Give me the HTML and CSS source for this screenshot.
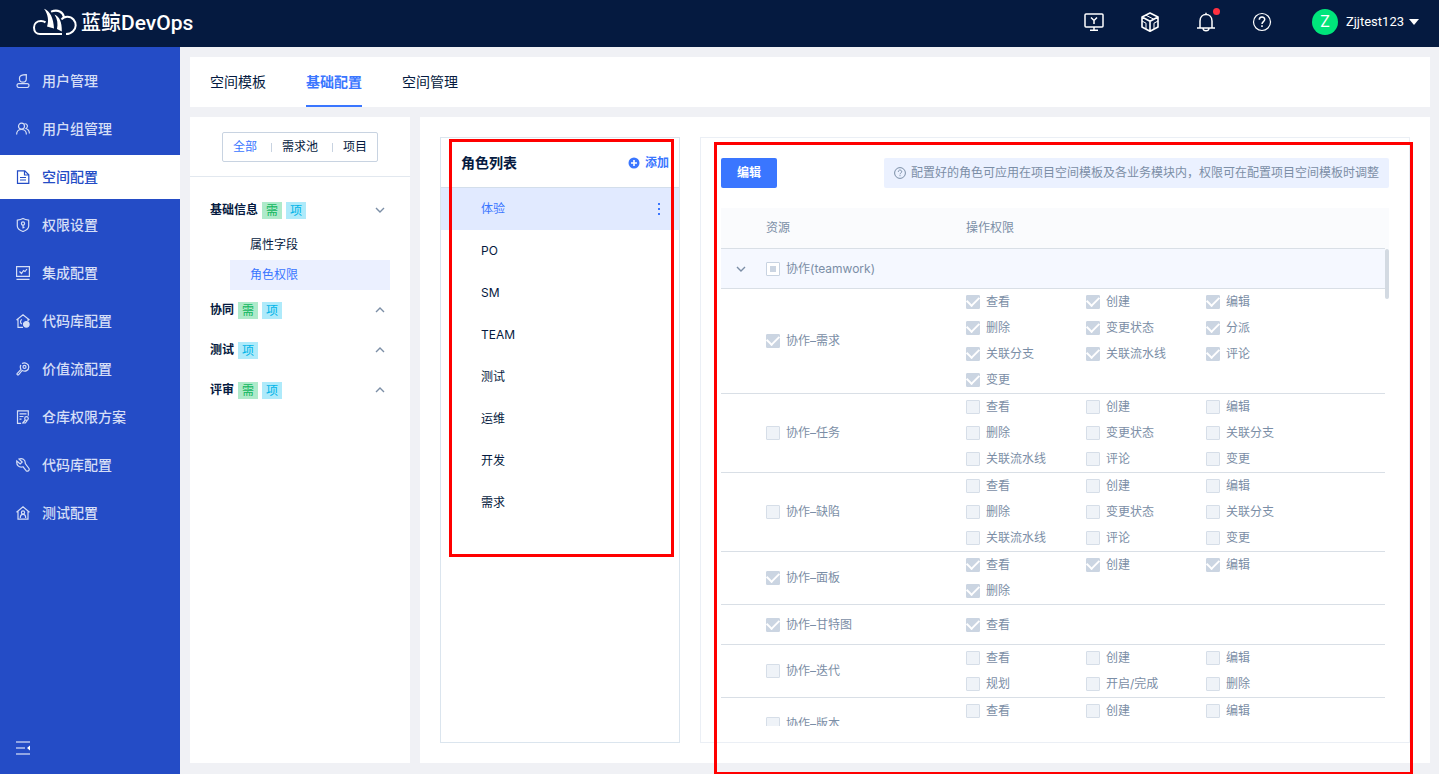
FILE: index.html
```html
<!DOCTYPE html>
<html lang="zh-CN">
<head>
<meta charset="utf-8">
<title>蓝鲸DevOps</title>
<link rel="stylesheet" href="styles.css">
</head>
<body>
<div class="app">
  <header class="topbar">
    <a class="brand" href="#">
      <svg class="brand-mark" viewBox="0 0 44 28" fill="none" stroke="currentColor" stroke-width="2">
        <path d="M29 26H7C3.500 26 1 23.500 1 19.500 1 15.500 4 13 8 13c2.200 0 3.500.6 4.500 1.400"/>
        <path d="M18 3.600C25 1 30 4 31 9.200"/>
        <path d="M28.500 11.500C31 8 37 7.500 40.500 11.500 43.500 15 43.500 20 40 23.200 38 25.200 35.500 26 33 26"/>
        <path d="M11 .8C17 3 20.500 10 21 20.500L14 18.500C16 13 15 6 11 .8Z" fill="currentColor" stroke="none"/>
        <path d="M21.500 6.500C26.500 8.500 29 14 28.800 23.500L24 21C25 16 24.500 11 21.500 6.500Z" fill="currentColor" stroke="none"/>
      </svg>
      <span class="brand-name">蓝鲸<span class="brand-latin">DevOps</span></span>
    </a>
    <div class="top-actions">
      <button class="icon-btn" aria-label="工作台">
        <svg viewBox="0 0 20 20" fill="none" stroke="currentColor" stroke-width="1.500"><rect x="1" y="2" width="18" height="13" rx="1"/><path d="M10 15v3M6 18.300h8M7 5.500l3 3 3-3M10 8.500V12"/></svg>
      </button>
      <button class="icon-btn" aria-label="产品">
        <svg viewBox="0 0 20 20" fill="none" stroke="currentColor" stroke-width="1.600" stroke-linejoin="round"><path d="M10 1l8 4-8 4.200L2 5zM2 5v10l8 4.300 8-4.300V5M10 9.200v10"/><path d="M5.800 3.200l8 4M2 9l4 2.200V17M18 9l-4 2.200V17" stroke-width="1"/></svg>
      </button>
      <button class="icon-btn" aria-label="通知">
        <svg viewBox="0 0 20 20" fill="none" stroke="currentColor" stroke-width="1.500"><path d="M1 16h18M4 16V9c0-4 2.700-6.500 6-6.500S16 5 16 9v7M10 .8v1.700M7 16.500c.4 3 5.600 3 6 0"/></svg>
        <span class="dot"></span>
      </button>
      <button class="icon-btn" aria-label="帮助">
        <svg viewBox="0 0 20 20" fill="none" stroke="currentColor" stroke-width="1.200"><circle cx="10" cy="10" r="8.500"/><path d="M7.300 7.800c0-3.600 5.400-3.600 5.400-.2 0 2-2.700 2.200-2.700 4.400M10 13.300v1.700" stroke-width="1.500"/></svg>
      </button>
      <button class="user"><span class="avatar">Z</span><span class="user-name">Zjjtest123</span><svg class="caret" viewBox="0 0 10 6"><path d="M0 0h10L5 6z" fill="currentColor"/></svg></button>
    </div>
  </header>

  <div class="body">
    <nav class="sidebar">
      <ul class="menu">
        <li><a href="#" class="menu-item"><svg class="ico" viewBox="0 0 14 14"><path d="M3.500 3.700C3.500 1.800 5.500.7 10.300.6V4.800c0 2.200-1.400 3.400-3.300 3.400S3.500 7 3.500 5z"/><rect x="1" y="9.700" width="12" height="3.800" rx="1.900"/></svg>用户管理</a></li>
        <li><a href="#" class="menu-item"><svg class="ico" viewBox="0 0 14 14"><circle cx="5.500" cy="4.200" r="3"/><path d="M.6 12.500c0-3.300 2-5 4.900-5s4.900 1.700 4.900 5M8.500 1.800c3-.4 4 3.400 1.600 4.700 2 .8 3.300 2.500 3.300 5"/></svg>用户组管理</a></li>
        <li><a href="#" class="menu-item active" aria-current="page"><svg class="ico" viewBox="0 0 14 14"><path d="M1.500.8h7.300l4 4v8.600H1.500zM8.500 1v4h4M4 7.500h6M4 10h6"/></svg>空间配置</a></li>
        <li><a href="#" class="menu-item"><svg class="ico" viewBox="0 0 14 14"><path d="M7 .6C9 1.800 10.500 2 12.700 2.200V8c0 2.500-2.700 4.500-5.700 5.500C4 12.500 1.300 10.500 1.300 8V2.200C3.500 2 5 1.800 7 .6z"/><circle cx="7" cy="5.500" r="1.600"/><path d="M7 7v3.500M7 9.300h1.500"/></svg>权限设置</a></li>
        <li><a href="#" class="menu-item"><svg class="ico" viewBox="0 0 14 14"><path d="M.6.6h12.800v9.800H.6zM.5 13.300h13M3.500 5.500l2 2 2-3 1.500 1 2-2.500"/></svg>集成配置</a></li>
        <li><a href="#" class="menu-item"><svg class="ico" viewBox="0 0 14 14"><path d="M.5 6L7 .8 13.500 6M2 5v8.300h5M12 5v2M6 5.500C4 6 4 9.500 6 10"/><circle cx="10.300" cy="10.300" r="2.800" fill="currentColor"/></svg>代码库配置</a></li>
        <li><a href="#" class="menu-item"><svg class="ico" viewBox="0 0 14 14"><path d="M6 1.500C9 .2 12.800 1.500 12.800 5c0 3.400-3.500 5.200-6.600 3.400L2.700 12.600c-1 1-2.300-.4-1.400-1.300L5 7.500C4 5.500 4.300 3.800 5 3"/><circle cx="8.500" cy="4.900" r="1.500"/></svg>价值流配置</a></li>
        <li><a href="#" class="menu-item"><svg class="ico" viewBox="0 0 14 14"><path d="M5 13.300H1.500V.8h10.800v5M3.500 3.800h7M3.500 6.500h4M3.500 9.200h2"/><circle cx="10.500" cy="8.500" r="1.800"/><path d="M9.300 10l-2.500 3h2.500l2-2.700"/></svg>仓库权限方案</a></li>
        <li><a href="#" class="menu-item"><svg class="ico" viewBox="0 0 14 14"><path d="M3 1C6 0 9.500 1.200 9.300 5.500l3.700 5c.8 2-1.300 3.500-2.900 2.200L7 8.800C3 10 .2 7 .8 3l3.400 3 2-2z"/></svg>代码库配置</a></li>
        <li><a href="#" class="menu-item"><svg class="ico" viewBox="0 0 14 14"><path d="M.5 6.300L7 .8l6.500 5.500M2 5.200v8h10v-8"/><circle cx="7" cy="6.500" r="1.600"/><path d="M4.300 12c0-4.800 5.400-4.800 5.400 0"/></svg>测试配置</a></li>
      </ul>
      <button class="collapse" aria-label="收起菜单"><svg class="ico" viewBox="0 0 14 14"><path d="M0 1h14M0 7h9M0 13h14"/><path d="M14 4.500v5L11 7z" fill="currentColor" stroke="none"/></svg></button>
    </nav>

    <main class="main">
      <nav class="tabs">
        <a href="#" class="tab">空间模板</a>
        <a href="#" class="tab active">基础配置</a>
        <a href="#" class="tab">空间管理</a>
      </nav>

      <div class="columns">
        <aside class="tree-panel">
          <div class="filter">
            <div class="segment">
              <button class="seg active">全部</button><span class="seg-line"></span>
              <button class="seg">需求池</button><span class="seg-line"></span>
              <button class="seg">项目</button>
            </div>
          </div>
          <div class="tree">
            <button class="group">基础信息<span class="tag green">需</span><span class="tag cyan">项</span><svg class="chev" viewBox="0 0 10 10"><path d="M1 3l4 4 4-4"/></svg></button>
            <a href="#" class="leaf">属性字段</a>
            <a href="#" class="leaf active">角色权限</a>
            <button class="group">协同<span class="tag green">需</span><span class="tag cyan">项</span><svg class="chev" viewBox="0 0 10 10"><path d="M1 7l4-4 4 4"/></svg></button>
            <button class="group">测试<span class="tag cyan">项</span><svg class="chev" viewBox="0 0 10 10"><path d="M1 7l4-4 4 4"/></svg></button>
            <button class="group">评审<span class="tag green">需</span><span class="tag cyan">项</span><svg class="chev" viewBox="0 0 10 10"><path d="M1 7l4-4 4 4"/></svg></button>
          </div>
        </aside>

        <div class="content">
          <section class="roles">
            <div class="roles-head">
              <h2 class="roles-title">角色列表</h2>
              <button class="add"><svg class="plus" viewBox="0 0 12 12"><circle cx="6" cy="6" r="5.500" fill="currentColor"/><path d="M6 3v6M3 6h6" stroke="#fff" stroke-width="1.600"/></svg>添加</button>
            </div>
            <ul class="role-list">
              <li class="role active">体验<button class="more" aria-label="更多"><svg viewBox="0 0 2 14" fill="currentColor"><path d="M0 1h2v2H0zM0 6h2v2H0zM0 11h2v2H0z"/></svg></button></li>
              <li class="role">PO</li>
              <li class="role">SM</li>
              <li class="role">TEAM</li>
              <li class="role">测试</li>
              <li class="role">运维</li>
              <li class="role">开发</li>
              <li class="role">需求</li>
            </ul>
            <div class="mark mark-roles"></div>
          </section>

          <section class="detail">
            <div class="toolbar">
              <button class="edit">编辑</button>
              <p class="hint"><svg class="hint-ico" viewBox="0 0 12 12"><circle cx="6" cy="6" r="5.400"/><path d="M4.300 4.800c0-2.300 3.400-2.300 3.400-.1C7.700 6 6 6 6 7.300M6 8.200v1"/></svg>配置好的角色可应用在项目空间模板及各业务模块内，权限可在配置项目空间模板时调整</p>
            </div>
            <div class="table-wrap">
              <table class="perms">
                <thead>
                  <tr><th class="c-open"></th><th class="c-res">资源</th><th>操作权限</th></tr>
                </thead>
                <tbody>
                  <tr class="parent">
                    <td><svg class="chev" viewBox="0 0 10 10"><path d="M1 3l4 4 4-4"/></svg></td>
                    <td><label class="check"><input type="checkbox" class="partial" disabled>协作(teamwork)</label></td>
                    <td></td>
                  </tr>
                  <tr>
                    <td></td>
                    <td><label class="check"><input type="checkbox" checked disabled>协作–需求</label></td>
                    <td><div class="ops">
                      <label class="check"><input type="checkbox" checked disabled>查看</label>
                      <label class="check"><input type="checkbox" checked disabled>创建</label>
                      <label class="check"><input type="checkbox" checked disabled>编辑</label>
                      <label class="check"><input type="checkbox" checked disabled>删除</label>
                      <label class="check"><input type="checkbox" checked disabled>变更状态</label>
                      <label class="check"><input type="checkbox" checked disabled>分派</label>
                      <label class="check"><input type="checkbox" checked disabled>关联分支</label>
                      <label class="check"><input type="checkbox" checked disabled>关联流水线</label>
                      <label class="check"><input type="checkbox" checked disabled>评论</label>
                      <label class="check"><input type="checkbox" checked disabled>变更</label>
                    </div></td>
                  </tr>
                  <tr>
                    <td></td>
                    <td><label class="check"><input type="checkbox" disabled>协作–任务</label></td>
                    <td><div class="ops">
                      <label class="check"><input type="checkbox" disabled>查看</label>
                      <label class="check"><input type="checkbox" disabled>创建</label>
                      <label class="check"><input type="checkbox" disabled>编辑</label>
                      <label class="check"><input type="checkbox" disabled>删除</label>
                      <label class="check"><input type="checkbox" disabled>变更状态</label>
                      <label class="check"><input type="checkbox" disabled>关联分支</label>
                      <label class="check"><input type="checkbox" disabled>关联流水线</label>
                      <label class="check"><input type="checkbox" disabled>评论</label>
                      <label class="check"><input type="checkbox" disabled>变更</label>
                    </div></td>
                  </tr>
                  <tr>
                    <td></td>
                    <td><label class="check"><input type="checkbox" disabled>协作–缺陷</label></td>
                    <td><div class="ops">
                      <label class="check"><input type="checkbox" disabled>查看</label>
                      <label class="check"><input type="checkbox" disabled>创建</label>
                      <label class="check"><input type="checkbox" disabled>编辑</label>
                      <label class="check"><input type="checkbox" disabled>删除</label>
                      <label class="check"><input type="checkbox" disabled>变更状态</label>
                      <label class="check"><input type="checkbox" disabled>关联分支</label>
                      <label class="check"><input type="checkbox" disabled>关联流水线</label>
                      <label class="check"><input type="checkbox" disabled>评论</label>
                      <label class="check"><input type="checkbox" disabled>变更</label>
                    </div></td>
                  </tr>
                  <tr>
                    <td></td>
                    <td><label class="check"><input type="checkbox" checked disabled>协作–面板</label></td>
                    <td><div class="ops">
                      <label class="check"><input type="checkbox" checked disabled>查看</label>
                      <label class="check"><input type="checkbox" checked disabled>创建</label>
                      <label class="check"><input type="checkbox" checked disabled>编辑</label>
                      <label class="check"><input type="checkbox" checked disabled>删除</label>
                    </div></td>
                  </tr>
                  <tr>
                    <td></td>
                    <td><label class="check"><input type="checkbox" checked disabled>协作–甘特图</label></td>
                    <td><div class="ops">
                      <label class="check"><input type="checkbox" checked disabled>查看</label>
                    </div></td>
                  </tr>
                  <tr>
                    <td></td>
                    <td><label class="check"><input type="checkbox" disabled>协作–迭代</label></td>
                    <td><div class="ops">
                      <label class="check"><input type="checkbox" disabled>查看</label>
                      <label class="check"><input type="checkbox" disabled>创建</label>
                      <label class="check"><input type="checkbox" disabled>编辑</label>
                      <label class="check"><input type="checkbox" disabled>规划</label>
                      <label class="check"><input type="checkbox" disabled>开启/完成</label>
                      <label class="check"><input type="checkbox" disabled>删除</label>
                    </div></td>
                  </tr>
                  <tr class="two-line">
                    <td></td>
                    <td><label class="check"><input type="checkbox" disabled>协作–版本</label></td>
                    <td><div class="ops">
                      <label class="check"><input type="checkbox" disabled>查看</label>
                      <label class="check"><input type="checkbox" disabled>创建</label>
                      <label class="check"><input type="checkbox" disabled>编辑</label>
                    </div></td>
                  </tr>
                </tbody>
              </table>
              <div class="track"><div class="thumb"></div></div>
            </div>
            <div class="mark mark-detail"></div>
          </section>
        </div>
      </div>
    </main>
  </div>
</div>
</body>
</html>
```

FILE: styles.css
```css
* { box-sizing: border-box; }

:root {
  --navy: #051a40;
  --blue: #3a76ff;
  --side: #244cc6;
  --muted: #7b8ea6;
  --line: #d9dfe6;
}

body {
  margin: 0;
  font-family: Inter, "Noto Sans CJK SC", sans-serif;
  font-size: 12px;
  line-height: 20px;
  color: var(--navy);
  background: #f0f1f5;
}

button {
  margin: 0;
  padding: 0;
  border: 0;
  background: none;
  color: inherit;
  font: inherit;
  cursor: pointer;
}

a { color: inherit; text-decoration: none; }
ul { margin: 0; padding: 0; list-style: none; }
svg { display: block; flex: none; }

.app {
  display: flex;
  flex-direction: column;
  height: 100vh;
  overflow: hidden;
}

/* Top bar */
.topbar {
  display: flex;
  flex: none;
  align-items: center;
  justify-content: space-between;
  height: 47px;
  padding: 0 20px 3px 33px;
  background: var(--navy);
  color: #fff;
}

.brand { display: flex; align-items: center; gap: 4px; }
.brand-mark { width: 44px; height: 28px; }
.brand-name {
  padding-top: 2px;
  font-family: Roboto, "Noto Sans CJK SC", sans-serif;
  font-size: 20px;
  font-weight: 500;
  line-height: 28px;
}
.brand-latin { font-size: 21px; }

.top-actions { display: flex; align-items: center; gap: 36px; }
.icon-btn { position: relative; width: 20px; height: 20px; }
.icon-btn svg { width: 20px; height: 20px; }
.dot {
  position: absolute;
  top: -4px;
  right: -4px;
  width: 7px;
  height: 7px;
  border-radius: 50%;
  background: #ff3040;
}

.user { display: flex; align-items: center; margin-left: 4px; }
.avatar {
  width: 26px;
  height: 26px;
  margin-right: 8px;
  border-radius: 50%;
  background: #00e57b;
  font-size: 16px;
  line-height: 24px;
}
.user-name { font-family: Roboto, sans-serif; font-size: 13px; }
.caret { width: 10px; height: 6px; margin-left: 5px; }

.body { display: flex; flex: 1; min-height: 0; }

/* Sidebar */
.sidebar {
  display: flex;
  flex: none;
  flex-direction: column;
  justify-content: space-between;
  width: 180px;
  padding: 12px 0 19px;
  background: var(--side);
  color: #d5def6;
}
.menu { display: flex; flex-direction: column; gap: 4px; }
.menu-item {
  display: flex;
  align-items: center;
  gap: 12px;
  height: 44px;
  padding-left: 16px;
  font-size: 14px;
  font-weight: 500;
}
.menu-item.active { background: #fff; color: var(--side); }
.ico {
  width: 14px;
  height: 14px;
  fill: none;
  stroke: currentColor;
  stroke-width: 1.2;
}
.collapse { align-self: flex-start; margin-left: 16px; color: #fff; }

/* Main area */
.main {
  display: flex;
  flex: 1;
  flex-direction: column;
  gap: 10px;
  min-width: 0;
  padding: 10px 9px 11px 10px;
}
.tabs {
  display: flex;
  flex: none;
  gap: 40px;
  height: 50px;
  padding: 0 20px;
  background: #fff;
}
.tab {
  border-bottom: 2px solid transparent;
  font-size: 14px;
  line-height: 50px;
}
.tab.active { border-color: var(--blue); color: var(--blue); font-weight: 700; }

.columns { display: flex; flex: 1; gap: 10px; min-height: 0; }

/* Settings tree */
.tree-panel { flex: none; width: 220px; background: #fff; }
.filter {
  display: flex;
  justify-content: center;
  padding: 15px 0 14px;
  border-bottom: 1px solid #e2e8ef;
}
.segment {
  display: flex;
  align-items: center;
  height: 30px;
  padding: 0 10px;
  border: 1px solid #c8d3e1;
  border-radius: 2px;
}
.seg.active { color: var(--blue); }
.seg-line { width: 1px; height: 9px; margin: 0 10px 0 14px; background: #c8d3e1; }

.tree { padding-top: 13px; }
.group {
  display: flex;
  align-items: center;
  gap: 4px;
  width: 100%;
  height: 40px;
  padding: 0 25px 0 20px;
  font-weight: 700;
}
.tag {
  width: 20px;
  height: 17px;
  font-weight: 400;
  line-height: 17px;
  text-align: center;
}
.green { background: #aeeaca; color: #10b75e; }
.cyan { background: #aeeafa; color: #00b4e8; }
.chev {
  width: 10px;
  height: 10px;
  fill: none;
  stroke: var(--muted);
  stroke-width: 1.4;
}
.group .chev { margin-left: auto; }
.leaf {
  display: block;
  margin: 0 20px 0 40px;
  padding: 0 20px;
  line-height: 30px;
}
.leaf.active { background: #ebf0ff; color: var(--blue); }

/* Roles */
.content {
  display: flex;
  flex: 1;
  gap: 20px;
  min-width: 0;
  padding: 20px;
  background: #fff;
}
.roles {
  position: relative;
  flex: none;
  width: 240px;
  border: 1px solid #dbe5ee;
}
.roles-head {
  display: flex;
  align-items: center;
  justify-content: space-between;
  height: 50px;
  padding: 0 10px 0 20px;
  border-bottom: 1px solid #d3deeb;
}
.roles-title { margin: 0; font-size: 14px; font-weight: 700; }
.add {
  display: flex;
  align-items: center;
  gap: 5px;
  color: var(--blue);
  font-weight: 700;
}
.plus { width: 12px; height: 12px; }
.role {
  display: flex;
  align-items: center;
  justify-content: space-between;
  height: 42px;
  padding: 0 19px 0 40px;
}
.role.active { background: #e1eaff; color: var(--blue); }
.more svg { width: 2px; height: 14px; }

/* Permission details */
.detail {
  position: relative;
  display: flex;
  flex: 1;
  flex-direction: column;
  gap: 20px;
  min-width: 0;
  padding: 20px 20px 16px;
  border: 1px solid #ebeff5;
}
.toolbar { display: flex; flex: none; justify-content: space-between; }
.edit {
  height: 30px;
  padding: 0 16px;
  border-radius: 2px;
  background: var(--blue);
  color: #fff;
  font-weight: 700;
}
.hint {
  display: flex;
  align-items: center;
  gap: 5px;
  height: 30px;
  margin: 0;
  padding: 0 10px;
  border-radius: 2px;
  background: #ebf1ff;
  color: var(--muted);
  white-space: nowrap;
}
.hint-ico {
  width: 12px;
  height: 12px;
  fill: none;
  stroke: currentColor;
  stroke-width: 1;
}

.table-wrap { display: flex; flex: 1; min-height: 0; overflow: hidden; }
.perms {
  flex: 1;
  align-self: flex-start;
  border-collapse: separate;
  border-spacing: 0;
  table-layout: fixed;
  color: var(--muted);
}
.perms th, .perms td { padding: 0; border-bottom: 1px solid var(--line); }
.perms th {
  height: 41px;
  background: #fafbfd;
  font-weight: 400;
  text-align: left;
}
.c-open { width: 45px; }
.c-res { width: 200px; }
.perms td { height: 40px; }
.perms .parent td { background: #f5f8ff; }
.perms .two-line td { height: 53px; }
.two-line .ops { height: 52px; }
.perms td > .chev { margin: 0 auto 0 15px; }
.ops {
  display: grid;
  grid-template-columns: repeat(3, 120px);
  grid-auto-rows: 26px;
}
.check { display: flex; align-items: center; gap: 6px; white-space: nowrap; }
.check input {
  display: grid;
  flex: none;
  place-content: center;
  width: 14px;
  height: 14px;
  margin: 0;
  appearance: none;
  border: 1px solid #d6dee8;
  border-radius: 1px;
  background: #eff3f8;
}
.check input:checked { border-color: #cbd5e2; background: #cbd5e2; }
.check input:checked::before {
  content: "";
  width: 10px;
  height: 6px;
  margin-bottom: 4px;
  border: solid #fff;
  border-width: 0 0 2px 2px;
  transform: rotate(-45deg);
}
.check .partial { border-color: #c8d3e1; background: #fff; }
.check .partial::before {
  content: "";
  width: 6px;
  height: 6px;
  background: #cbd5e2;
}

.track {
  flex: none;
  width: 4px;
  background: linear-gradient(#fafbfd 41px, transparent 41px);
  padding-top: 41px;
}
.thumb { height: 50px; border-radius: 2px; background: #d3dae2; }

/* Highlight frames over the two areas */
.mark { position: absolute; border: 3px solid #f00; pointer-events: none; }
.mark-roles { top: 1px; left: 8px; right: 5px; height: 418px; }
.mark-detail { top: 4px; left: 13px; right: -4px; bottom: -33px; }
```
